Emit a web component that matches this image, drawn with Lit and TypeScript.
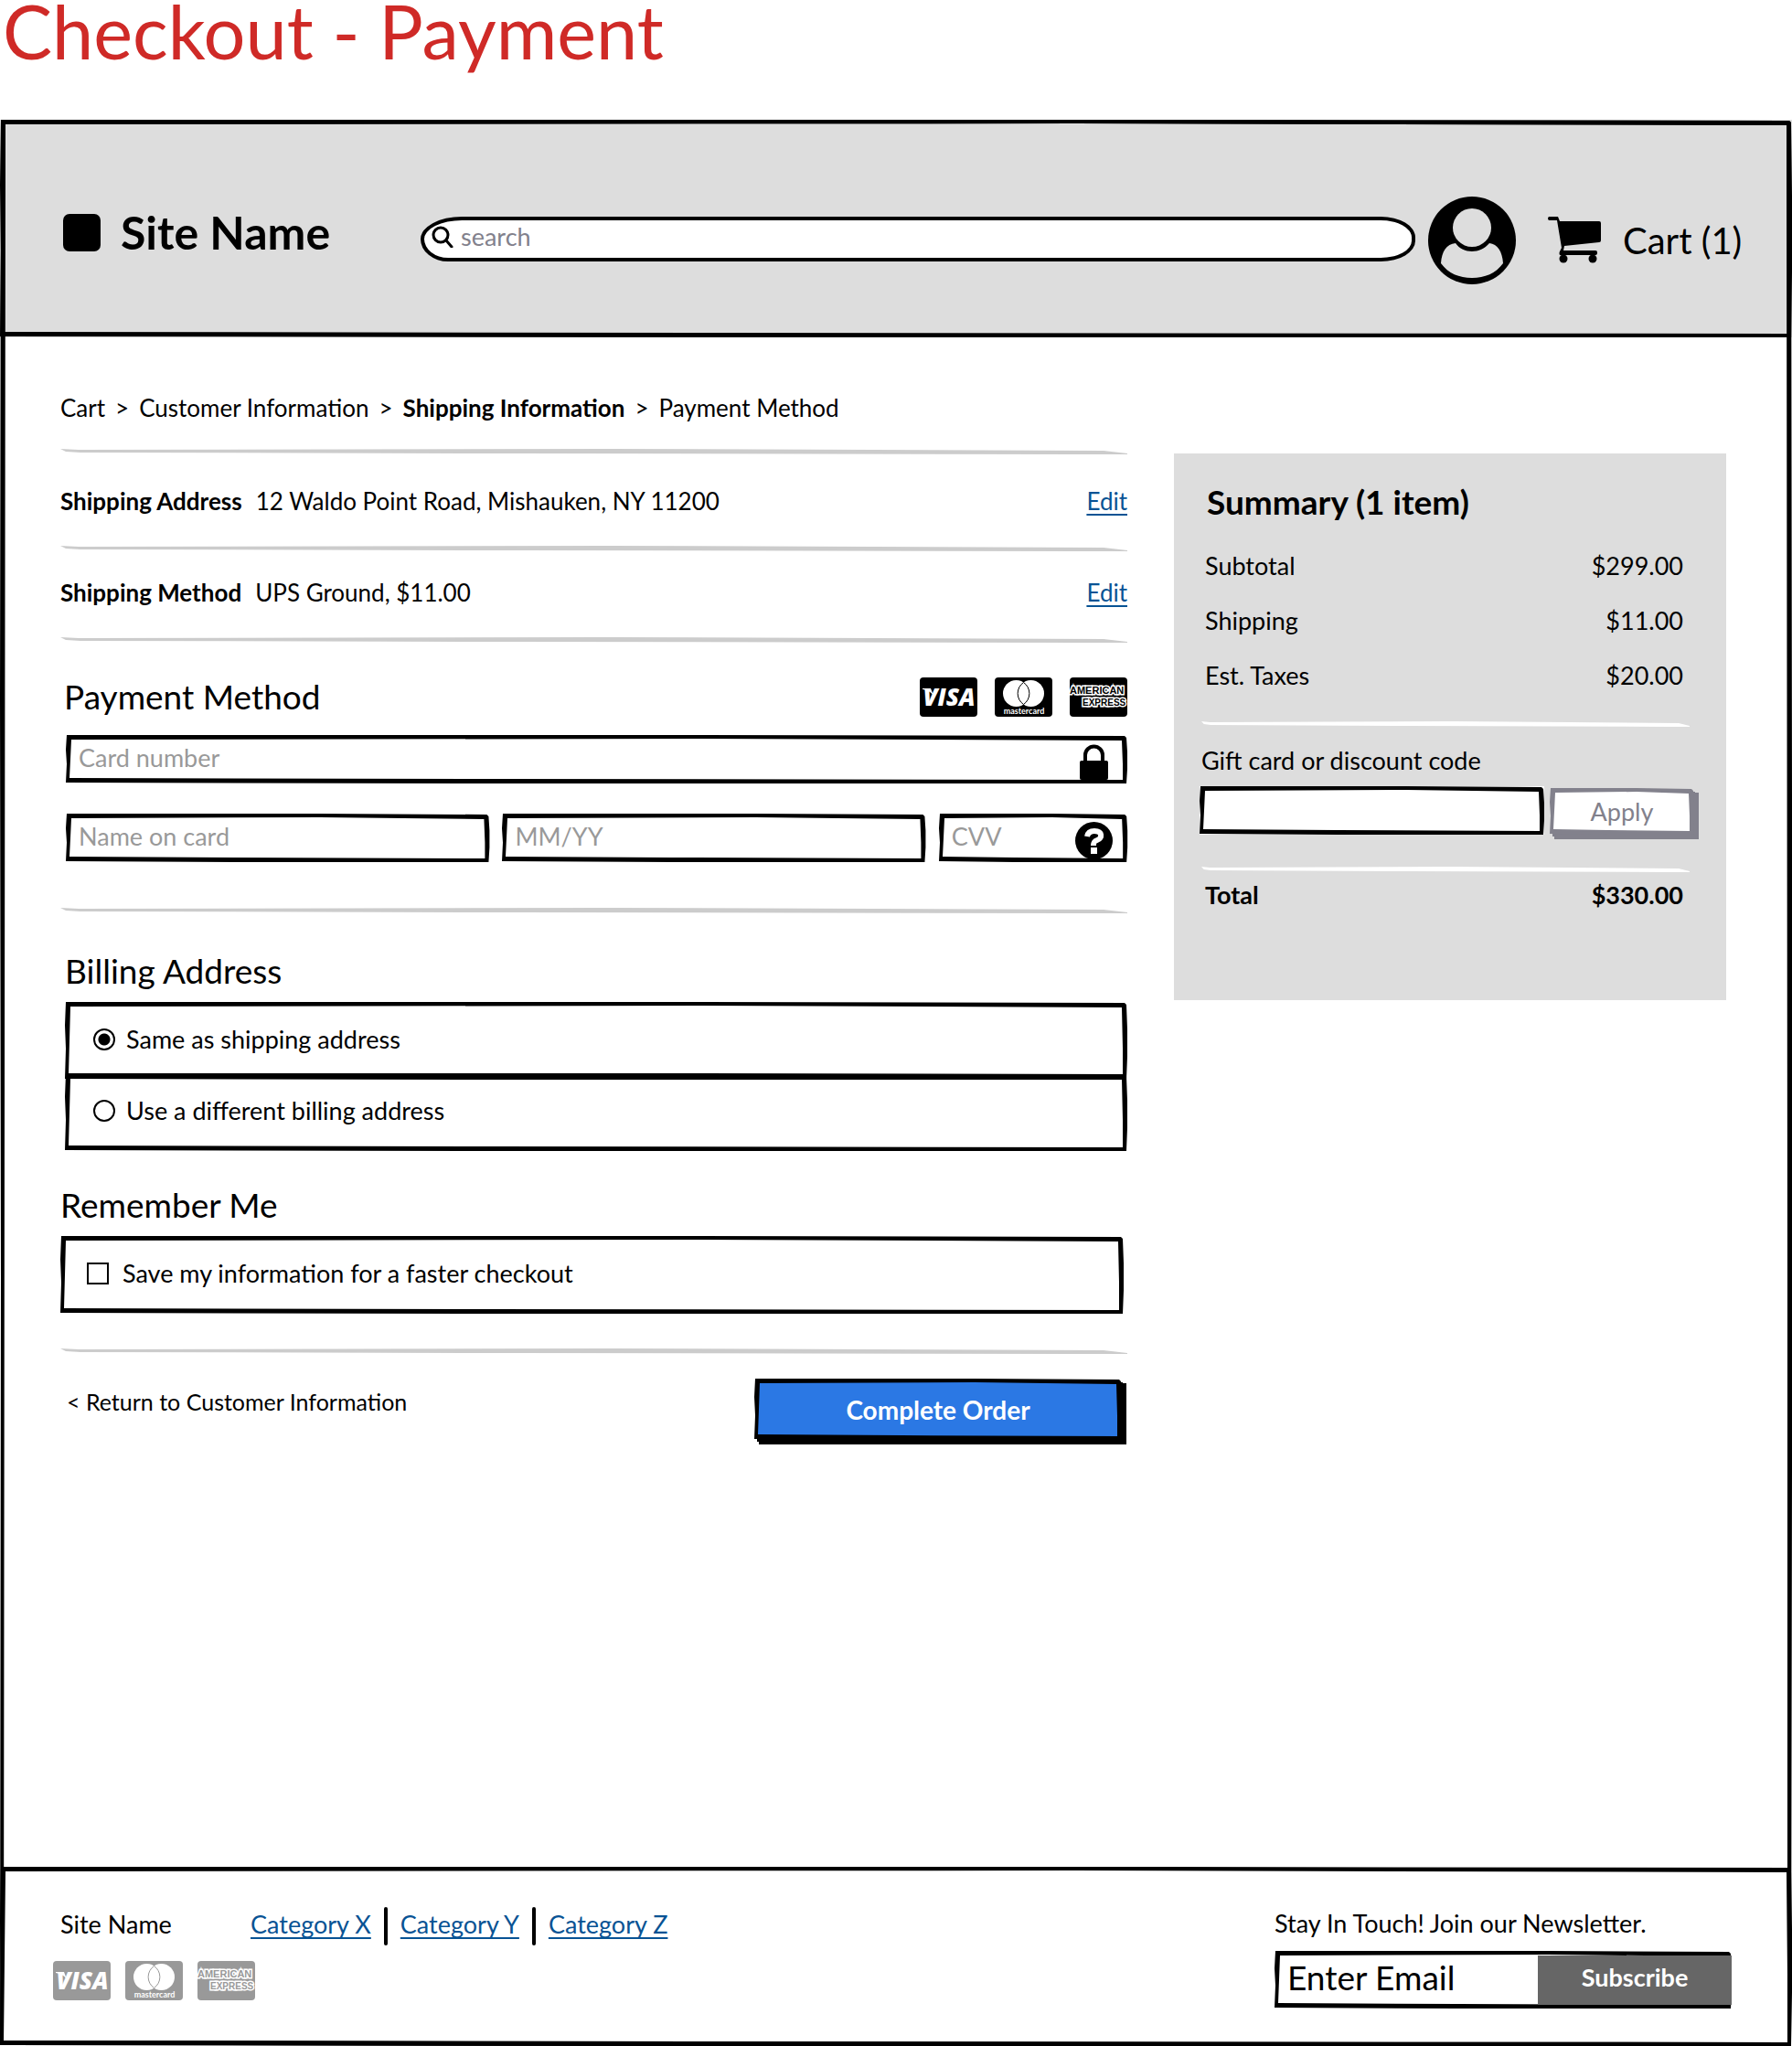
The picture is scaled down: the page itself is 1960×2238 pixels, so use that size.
import { LitElement, html, css, svg } from "lit";
import { customElement, state } from "lit/decorators.js";

/** Hand-drawn rectangle outline, stretched over its positioned parent. */
const frame = (w: number, h: number, t = 5) => html`
  <svg class="frame" viewBox="0 0 ${w} ${h}" preserveAspectRatio="none" aria-hidden="true">
    <path
      fill="currentColor"
      fill-rule="evenodd"
      d="M1 0 L${w * 0.6} 0 L${w - 3} 1 L${w - 1} 3 L${w} ${h * 0.35} L${w} ${h * 0.7} L${w - 1} ${h}
         L${w * 0.4} ${h} L0 ${h - 1} L1 ${h * 0.6} L0 ${h * 0.3} Z
         M${t + 1} ${t} L${t} ${h * 0.5} L${t - 1} ${h - t - 1} L${w * 0.4} ${h - t} L${w - t} ${h - t + 1}
         L${w - t} ${h * 0.6} L${w - t - 1} ${t + 1} L${w * 0.6} ${t - 1} Z"
    />
  </svg>
`;

const rule = (extra = "") => html`
  <svg class="rule ${extra}" viewBox="0 0 1166 6" preserveAspectRatio="none" aria-hidden="true">
    <path fill="currentColor" d="M0 0 L20 1 L600 0 L1140 2 L1166 5 L1166 6 L1120 6 L500 5 L22 4 L6 3 Z" />
  </svg>
`;

const visa = svg`<text x="32" y="31" text-anchor="middle" font-family="Open Sans, sans-serif" font-size="26" font-weight="800" font-style="italic" fill="#fff">VISA</text>
  <path fill="#fff" d="M3 12h9l3 8c-3-4-6-6-12-7z" />`;

const mastercard = svg`<g fill="#fff"><circle cx="23.500" cy="17.500" r="14.500" /><circle cx="39.500" cy="17.500" r="14.500" /></g>
  <path fill="none" stroke="currentColor" d="M31.500 5.500a14.500 14.500 0 0 1 0 24a14.500 14.500 0 0 1 0-24z" />
  <text x="32" y="40" text-anchor="middle" font-family="Lato, sans-serif" font-size="9" font-weight="700" fill="#fff">mastercard</text>`;

const amex = svg`<g font-family="Liberation Sans, sans-serif" font-weight="700" fill="currentColor" stroke="#fff" stroke-width="3" paint-order="stroke">
    <text x="0" y="18" font-size="11">AMERICAN</text><text x="14" y="31" font-size="10">EXPRESS</text></g>`;

const card = (name: string, art: unknown) => html`
  <svg class="card" viewBox="0 0 63 43" role="img" aria-label=${name}>
    <rect width="63" height="43" rx="4" fill="currentColor" />
    ${art}
  </svg>
`;

const cards = () => html`${card("Visa", visa)}${card("Mastercard", mastercard)}${card("American Express", amex)}`;

const amounts = [
  ["Subtotal", "$299.00"],
  ["Shipping", "$11.00"],
  ["Est. Taxes", "$20.00"],
];

@customElement("app-root")
export class AppRoot extends LitElement {
  @state() private billing = "same";

  static styles = css`
    :host {
      display: flex;
      flex-direction: column;
      min-height: 100vh;
      background: #fff;
      color: #000;
      font: 27px/32px Lato, "Open Sans", sans-serif;
    }
    *,
    *::before {
      box-sizing: border-box;
    }
    h1,
    h2,
    p,
    dl,
    dd,
    legend,
    fieldset {
      margin: 0;
      padding: 0;
      border: 0;
      min-width: 0;
    }
    input,
    button {
      font: inherit;
      color: inherit;
      margin: 0;
      border: 0;
      border-radius: 0;
      background: none;
    }
    svg {
      display: block;
      flex: none;
    }
    a {
      color: #085394;
      text-underline-offset: 4px;
      text-decoration-thickness: 2px;
      text-decoration-skip-ink: none;
    }
    .title {
      padding-left: 3px;
      margin-bottom: 63px;
      color: #cf2a27;
      font-size: 81px;
      line-height: 68px;
      font-weight: 400;
    }
    .frame {
      position: absolute;
      inset: 0;
      width: 100%;
      height: 100%;
      pointer-events: none;
      overflow: visible;
    }
    .site {
      position: relative;
      flex: 1;
      display: flex;
      flex-direction: column;
    }
    .header {
      position: relative;
      display: flex;
      align-items: center;
      height: 238px;
      padding: 26px 53px 0 69px;
      background: #ddd;
    }
    .brand {
      display: flex;
      align-items: center;
      gap: 22px;
      width: 391px;
      padding-bottom: 18px;
      font-size: 50px;
      line-height: 58px;
      font-weight: 700;
    }
    .logo {
      width: 41px;
      height: 41px;
      border-radius: 7px;
      background: #000;
    }
    .search {
      flex: 1;
      display: flex;
      align-items: center;
      gap: 8px;
      height: 49px;
      margin-bottom: 4px;
      padding: 0 24px 4px 8px;
      border: 4px solid #000;
      border-radius: 48px 40px 40px 32px / 26px 24px 24px 26px;
      background: #fff;
    }
    .search input {
      flex: 1;
      min-width: 0;
      padding: 0;
    }
    .search input::placeholder {
      color: #82818c;
      opacity: 1;
    }
    .avatar {
      margin: 0 34px 0 14px;
      padding: 0;
    }
    .cart {
      display: flex;
      align-items: center;
      gap: 23px;
      width: 215px;
      color: #000;
      font-size: 40px;
      line-height: 48px;
      text-decoration: none;
      white-space: nowrap;
    }
    .main {
      flex: 1;
      padding: 61px 72px 60px 66px;
    }
    .crumbs {
      display: flex;
      flex-wrap: wrap;
      gap: 11px;
      margin-bottom: 29px;
      font-size: 26px;
    }
    .crumbs a {
      color: #000;
      text-decoration: none;
    }
    .columns {
      display: grid;
      grid-template-columns: minmax(0, 1fr) minmax(320px, 604px);
      gap: 51px;
      align-items: start;
    }
    .rule {
      width: 100%;
      height: 6px;
      color: #ccc;
    }
    .rule.first {
      margin-bottom: 6px;
    }
    .rule.light {
      color: #fff;
    }
    .detail {
      display: flex;
      gap: 15px;
      padding: 29px 0 33px;
      font-size: 26px;
    }
    .detail a {
      margin-left: auto;
    }
    .section {
      padding: 37px 0 50px 6px;
    }
    .section.billing {
      padding: 41px 0 0 5px;
    }
    .section.remember {
      padding: 37px 4px 38px 0;
    }
    .heading {
      font-size: 37px;
      line-height: 44px;
      font-weight: 400;
    }
    .section-head {
      display: flex;
      justify-content: space-between;
      align-items: center;
      margin: 0 0 20px -2px;
    }
    .cards {
      display: flex;
      gap: 19px;
    }
    .card {
      width: 63px;
      height: 43px;
      overflow: hidden;
    }
    .field {
      position: relative;
      display: flex;
      height: 53px;
      background: #fff;
    }
    .field input {
      flex: 1;
      width: 100%;
      min-width: 0;
      padding: 0 14px 4px;
    }
    .field input::placeholder {
      color: #999;
      opacity: 1;
    }
    .field-icon {
      position: absolute;
      right: 16px;
      bottom: 3px;
      padding: 0;
    }
    .field-icon.lock {
      right: 21px;
      bottom: 4px;
    }
    .field-row {
      display: grid;
      grid-template-columns: 463fr 463fr 206fr;
      gap: 14px;
      margin-top: 33px;
    }
    .choices {
      margin-top: 12px;
    }
    .choice {
      position: relative;
      display: flex;
      align-items: center;
      height: 85px;
      padding: 0 31px 4px;
      gap: 12px;
    }
    .choice + .choice {
      margin-top: -7px;
    }
    .choice input {
      appearance: none;
      flex: none;
      width: 24px;
      height: 24px;
      border: 2px solid #000;
    }
    .choice input[type="radio"] {
      border-radius: 50%;
    }
    .choice input[type="radio"]:checked {
      background: radial-gradient(circle, #000 6px, transparent 7px);
    }
    .choice input[type="checkbox"]:checked {
      background: #000;
      box-shadow: inset 0 0 0 3px #fff;
    }
    .remember .choice {
      padding-left: 29px;
      gap: 15px;
    }
    .actions {
      display: flex;
      justify-content: space-between;
      align-items: flex-start;
      padding: 27px 6px 0 7px;
    }
    .actions a {
      margin-top: 9px;
      color: #000;
      text-decoration: none;
      font-size: 25px;
    }
    .complete,
    .apply {
      position: relative;
      padding: 0;
      border: 2px solid transparent;
      background-clip: padding-box;
    }
    .complete .frame,
    .apply .frame {
      inset: -2px;
      width: calc(100% + 4px);
      height: calc(100% + 4px);
    }
    .complete {
      width: 402px;
      height: 67px;
      color: #fff;
      background-color: #2b78e4;
      box-shadow: 2px 3px 0 -1px #000, 5px 5px 0 #000;
      font-size: 28px;
      font-weight: 700;
    }
    .complete .frame {
      color: #000;
    }
    .summary {
      min-height: 598px;
      margin-top: 5px;
      padding: 31px 30px 40px 28px;
      background: #ddd;
    }
    .summary h2 {
      padding-left: 8px;
      font-size: 37px;
      line-height: 44px;
      font-weight: 700;
    }
    .amounts {
      display: grid;
      gap: 28px;
      margin: 32px 0 34px;
    }
    .amount {
      display: flex;
      justify-content: space-between;
      padding: 0 17px 0 6px;
    }
    .amount.total {
      margin-top: 9px;
      font-weight: 700;
    }
    .rule-wrap {
      padding: 0 10px 0 2px;
    }
    .gift-label {
      display: block;
      margin: 21px 0 12px 2px;
    }
    .gift {
      display: flex;
      gap: 6px;
      margin-bottom: 35px;
    }
    .gift .field {
      flex: 1;
    }
    .apply {
      width: 158px;
      height: 51px;
      margin: 2px 5px 0 0;
      color: #82818c;
      background-color: #fff;
      box-shadow: 2px 3px 0 -1px #82818c, 5px 5px 0 #82818c;
    }
    .footer {
      position: relative;
      display: flex;
      justify-content: space-between;
      height: 196px;
      padding: 44px 66px 0 58px;
    }
    .footer-nav {
      display: flex;
      align-items: center;
      height: 42px;
      margin-bottom: 17px;
      padding-left: 8px;
    }
    .footer-nav a,
    .footer-name {
      padding-bottom: 4px;
    }
    .footer-name {
      width: 208px;
    }
    .divider {
      width: 4px;
      height: 42px;
      margin: 0 14px;
      border-radius: 2px;
      background: #000;
    }
    .footer .cards {
      gap: 16px;
      color: #999;
    }
    .newsletter {
      width: 500px;
      padding-top: 2px;
    }
    .newsletter label {
      display: block;
      margin-bottom: 14px;
    }
    .email {
      position: relative;
      display: flex;
      align-items: center;
      height: 63px;
    }
    .email input {
      flex: 1;
      min-width: 0;
      padding: 0 14px 6px;
      font-size: 37px;
      line-height: 44px;
    }
    .email input::placeholder {
      color: #000;
      opacity: 1;
    }
    .email button {
      position: relative;
      width: 212px;
      height: 54px;
      padding-bottom: 6px;
      color: #fff;
      background: #666;
      font-weight: 700;
    }
  `;

  private choose(e: Event) {
    this.billing = (e.target as HTMLInputElement).value;
  }

  private renderHeader() {
    return html`
      <header class="header">
        <div class="brand"><span class="logo"></span>Site Name</div>
        <div class="search" role="search">
          <svg width="24" height="24" viewBox="0 0 24 24" fill="none" stroke="#000" stroke-width="3" aria-hidden="true">
            <circle cx="10" cy="10" r="8" />
            <path d="M16 16l6 7" stroke-linecap="round" />
          </svg>
          <input type="search" aria-label="Search" placeholder="search" />
        </div>
        <button class="avatar" aria-label="Account">
          <svg width="96" height="96" viewBox="0 0 96 96" aria-hidden="true">
            <circle cx="48" cy="48" r="48" />
            <path fill="#ddd" d="M14 73C15 60 20 52 30 51C34 57 41 60 48 60S62 57 67 51C76 52 81 60 82 73C74 84 62 89 48 89S22 84 14 73Z" />
            <circle cx="48" cy="34" r="21" fill="#ddd" />
          </svg>
        </button>
        <a class="cart" href="#cart">
          <svg width="60" height="52" viewBox="0 0 60 52" aria-hidden="true">
            <path d="M2 0h10l2 5h43q2 0 2 2v19q0 2-2 2L19 32l-1 5h35q2 0 2 2v1q0 2-2 2H14q-1-2 0-4l2-4L11 4H2q-2-2 0-4z" />
            <circle cx="18" cy="46" r="4.500" />
            <circle cx="50" cy="46" r="4.500" />
          </svg>
          Cart (1)
        </a>
        ${frame(1958, 238)}
      </header>
    `;
  }

  private renderPayment() {
    return html`
      <section class="section">
        <div class="section-head">
          <h2 class="heading">Payment Method</h2>
          <div class="cards">${cards()}</div>
        </div>
        <div class="field">
          <input aria-label="Card number" placeholder="Card number" inputmode="numeric" />
          ${frame(1161, 53)}
          <svg class="field-icon lock" width="31" height="39" viewBox="0 0 31 39" aria-hidden="true">
            <path d="M6 20V12a9.500 9.500 0 0 1 19 0v8" fill="none" stroke="#000" stroke-width="4" />
            <rect y="18" width="31" height="21" rx="2" />
          </svg>
        </div>
        <div class="field-row">
          <div class="field">
            <input aria-label="Name on card" placeholder="Name on card" />
            ${frame(463, 53)}
          </div>
          <div class="field">
            <input aria-label="Expiry date" placeholder="MM/YY" />
            ${frame(463, 53)}
          </div>
          <div class="field">
            <input aria-label="Security code" placeholder="CVV" />
            ${frame(206, 53)}
            <button class="field-icon" aria-label="Security code help">
              <svg width="41" height="41" viewBox="0 0 41 41" aria-hidden="true">
                <circle cx="20.500" cy="20.500" r="20.500" />
                <path fill="none" stroke="#fff" stroke-width="6" d="M13 16c1-5 4-6 8-6c9 0 9 8 3 10c-3 1-4 2-4 6" />
                <rect x="17" y="28" width="7" height="7" fill="#fff" />
              </svg>
            </button>
          </div>
        </div>
      </section>
    `;
  }

  private renderBilling() {
    const options = [
      ["same", "Same as shipping address"],
      ["other", "Use a different billing address"],
    ];
    return html`
      <section class="section billing">
        <fieldset>
          <legend class="heading">Billing Address</legend>
          <div class="choices">
            ${options.map(
              ([value, label]) => html`
                <div class="choice">
                  <input type="radio" name="billing" id=${value} value=${value} .checked=${this.billing === value} @change=${this.choose} />
                  <label for=${value}>${label}</label>
                  ${frame(1161, 85)}
                </div>
              `,
            )}
          </div>
        </fieldset>
      </section>
      <section class="section remember">
        <h2 class="heading">Remember Me</h2>
        <div class="choices">
          <div class="choice">
            <input type="checkbox" id="remember" />
            <label for="remember">Save my information for a faster checkout</label>
            ${frame(1163, 85)}
          </div>
        </div>
      </section>
    `;
  }

  private renderSummary() {
    return html`
      <aside class="summary">
        <h2>Summary (1 item)</h2>
        <dl class="amounts">
          ${amounts.map(([label, value]) => html`<div class="amount"><dt>${label}</dt><dd>${value}</dd></div>`)}
        </dl>
        <div class="rule-wrap">${rule("light")}</div>
        <label class="gift-label" for="gift">Gift card or discount code</label>
        <div class="gift">
          <div class="field"><input id="gift" />${frame(377, 53)}</div>
          <button class="apply">Apply${frame(158, 51)}</button>
        </div>
        <div class="rule-wrap">${rule("light")}</div>
        <dl>
          <div class="amount total"><dt>Total</dt><dd>$330.00</dd></div>
        </dl>
      </aside>
    `;
  }

  private renderFooter() {
    return html`
      <footer class="footer">
        <div>
          <nav class="footer-nav" aria-label="Categories">
            <span class="footer-name">Site Name</span>
            <a href="#x">Category X</a><span class="divider"></span>
            <a href="#y">Category Y</a><span class="divider"></span>
            <a href="#z">Category Z</a>
          </nav>
          <div class="cards">${cards()}</div>
        </div>
        <form class="newsletter" @submit=${(e: Event) => e.preventDefault()}>
          <label for="email">Stay In Touch! Join our Newsletter.</label>
          <div class="email">
            ${frame(500, 63)}
            <input id="email" type="email" placeholder="Enter Email" />
            <button>Subscribe</button>
          </div>
        </form>
        ${frame(1958, 196)}
      </footer>
    `;
  }

  render() {
    return html`
      <h1 class="title">Checkout - Payment</h1>
      <div class="site">
        ${this.renderHeader()}
        <main class="main">
          <nav class="crumbs" aria-label="Breadcrumb">
            <a href="#cart">Cart</a><span>&gt;</span><a href="#customer">Customer Information</a><span>&gt;</span>
            <b>Shipping Information</b><span>&gt;</span><a href="#payment">Payment Method</a>
          </nav>
          <div class="columns">
            <div>
              ${rule("first")}
              <p class="detail"><b>Shipping Address</b><span>12 Waldo Point Road, Mishauken, NY 11200</span><a href="#address">Edit</a></p>
              ${rule()}
              <p class="detail"><b>Shipping Method</b><span>UPS Ground, $11.00</span><a href="#method">Edit</a></p>
              ${rule()} ${this.renderPayment()} ${rule()} ${this.renderBilling()} ${rule()}
              <div class="actions">
                <a href="#customer">&lt; Return to Customer Information</a>
                <button class="complete">Complete Order${frame(402, 67)}</button>
              </div>
            </div>
            ${this.renderSummary()}
          </div>
        </main>
        ${this.renderFooter()} ${frame(1958, 2107)}
      </div>
    `;
  }
}
